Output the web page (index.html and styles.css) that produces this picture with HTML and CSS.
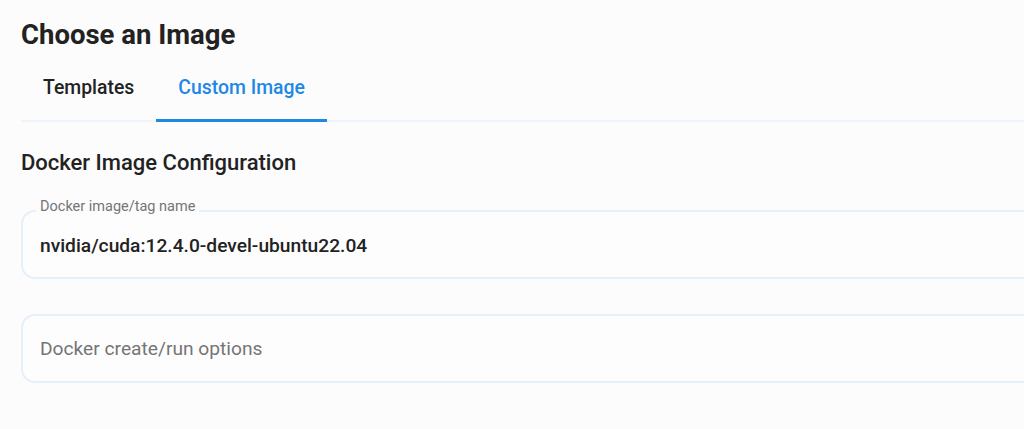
FILE: index.html
```html
<!DOCTYPE html>
<html>
<head>
<meta charset="utf-8">
<link rel="stylesheet" href="styles.css">
</head>
<body>
<div class="page">
  <h1 class="title">Choose an Image</h1>
  <div class="tabs">
    <div class="tab">Templates</div>
    <div class="tab active">Custom Image</div>
  </div>
  <h2 class="section">Docker Image Configuration</h2>
  <div class="field field-filled">
    <span class="label">Docker image/tag name</span>
    <div class="value">nvidia/cuda:12.4.0-devel-ubuntu22.04</div>
  </div>
  <div class="field field-empty">
    <div class="placeholder">Docker create/run options</div>
  </div>
</div>
</body>
</html>
```
FILE: styles.css
```css
html, body {
  margin: 0;
  padding: 0;
  background: #fcfcfd;
  font-family: Roboto, "Noto Sans", sans-serif;
  color: #212121;
}
.page {
  width: 1200px;
  padding: 0 0 0 21px;
}
.title {
  margin: 0;
  padding-top: 18px;
  font-size: 27.5px;
  line-height: 34px;
  font-weight: 700;
  color: #222;
}
.tabs {
  display: flex;
  margin-top: 12px;
  border-bottom: 2px solid #eef4fb;
  height: 56px;
}
.tab {
  padding: 0 22px 8px;
  display: flex;
  align-items: center;
  font-size: 19.4px;
  font-weight: 500;
  color: #222;
  margin-bottom: -2px;
  border-bottom: 3px solid transparent;
  box-sizing: border-box;
  height: 58px;
}
.tab.active {
  color: #1e88e5;
  border-bottom-color: #1e88e5;
}
.section {
  margin: 28px 0 0;
  font-size: 22px;
  line-height: 26px;
  font-weight: 500;
  color: #222;
}
.field {
  position: relative;
  box-sizing: border-box;
  height: 69px;
  border: 2px solid #e6f0fa;
  border-radius: 14px;
  background: #fdfdfe;
  padding: 0 17px;
  display: flex;
  align-items: center;
}
.field-filled {
  margin-top: 34px;
}
.field-empty {
  margin-top: 35px;
}
.label {
  position: absolute;
  top: -13px;
  left: 13px;
  padding: 0 4px;
  background: #fcfcfd;
  font-size: 14.5px;
  line-height: 16px;
  color: #757575;
}
.value {
  font-size: 19.2px;
  font-weight: 500;
  padding-top: 1px;
  color: #222;
}
.placeholder {
  font-size: 19.2px;
  color: #757575;
}
```
